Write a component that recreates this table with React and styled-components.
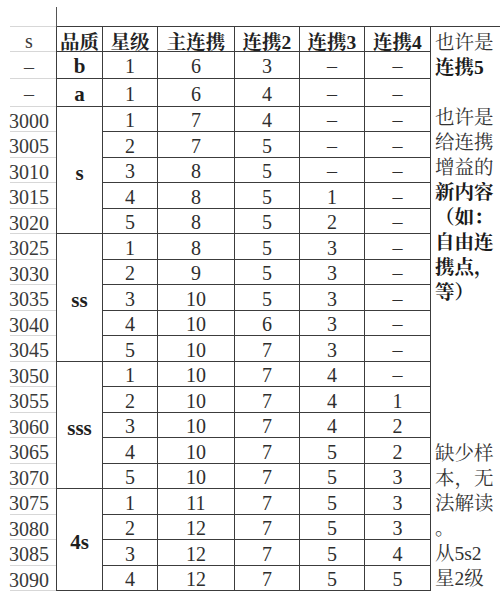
import React from "react";
import styled, { createGlobalStyle } from "styled-components";

const Global = createGlobalStyle`
  html, body { margin: 0; padding: 0; background: #fff; overflow: hidden; }
  body { width: 500px; height: 591px; }
`;

const LINE = "#3c3c3c";
const GRID = "#d7d7d7";
const SERIF = `"Liberation Serif", "Noto Serif CJK SC", "Noto Sans CJK SC", serif`;

const ROWS = [27, 25, 27, 28, 25, 26, 25, 26, 25, 26, 25, 26, 25, 26, 25, 26, 25, 26, 25, 26, 25, 26, 25];

const Sheet = styled.div`
  display: grid;
  grid-template-columns: 57px 46px 55px 77px 65px 65px 66px 69px;
  grid-template-rows: ${ROWS.map((h) => h + "px").join(" ")};
  width: 500px;
  font-family: ${SERIF};
  color: #2e2e2e;
`;

const TopGutter = styled.div`
  box-sizing: border-box;
  background:
    linear-gradient(#555, #555) no-repeat right 0 bottom 0 / 1px 20px,
    linear-gradient(${GRID}, ${GRID}) no-repeat left 10px bottom 0 / calc(100% - 10px) 1px;
`;

const TopBlank = styled.div`
  grid-column: span 7;
  box-sizing: border-box;
  border-bottom: 1px solid ${LINE};
`;

const LabelCell = styled.div`
  box-sizing: border-box;
  display: flex;
  align-items: center;
  justify-content: center;
  padding: 3px 0 0 2px;
  font-size: 20px;
  color: #3a3a3a;
  border-right: 1px solid ${LINE};
  background: linear-gradient(${GRID}, ${GRID}) no-repeat left 10px bottom 0 / calc(100% - 10px) 1px;
`;

const Cell = styled.div`
  box-sizing: border-box;
  display: flex;
  align-items: center;
  justify-content: center;
  padding-top: 3px;
  font-size: 20px;
  border-right: 1px solid ${LINE};
  border-bottom: 1px solid ${LINE};
  white-space: nowrap;
`;

const HeadCell = styled(Cell)`
  font-weight: 700;
  color: #222;
  font-size: 19.5px;
`;

const QualityCell = styled(Cell)`
  grid-row: span ${(p) => p.$span || 1};
  font-weight: 700;
  font-size: 21px;
  color: #1e1e1e;
  padding-top: ${(p) => (p.$span > 1 ? "6px" : "3px")};
`;

const NoteCell = styled.div`
  grid-row: span 22;
  box-sizing: border-box;
  display: flex;
  flex-direction: column;
  padding: 2.5px 0 0 4px;
  font-size: 19.5px;
  color: #2a2a2a;
  overflow: hidden;
`;

const NoteBlock = styled.div`
  display: flex;
  flex-direction: column;
  margin-top: ${(p) => p.$gap || 0}px;
`;

const NoteLine = styled.div`
  height: 25px;
  line-height: 25px;
  white-space: nowrap;
  font-weight: ${(p) => (p.$bold ? 700 : 400)};
  color: ${(p) => (p.$bold ? "#1a1a1a" : "#333")};
`;

const D = "–";

const data = [
  ["–", { q: "b", span: 1 }, "1", "6", "3", D, D],
  ["–", { q: "a", span: 1 }, "1", "6", "4", D, D],
  ["3000", { q: "s", span: 5 }, "1", "7", "4", D, D],
  ["3005", null, "2", "7", "5", D, D],
  ["3010", null, "3", "8", "5", D, D],
  ["3015", null, "4", "8", "5", "1", D],
  ["3020", null, "5", "8", "5", "2", D],
  ["3025", { q: "ss", span: 5 }, "1", "8", "5", "3", D],
  ["3030", null, "2", "9", "5", "3", D],
  ["3035", null, "3", "10", "5", "3", D],
  ["3040", null, "4", "10", "6", "3", D],
  ["3045", null, "5", "10", "7", "3", D],
  ["3050", { q: "sss", span: 5 }, "1", "10", "7", "4", D],
  ["3055", null, "2", "10", "7", "4", "1"],
  ["3060", null, "3", "10", "7", "4", "2"],
  ["3065", null, "4", "10", "7", "5", "2"],
  ["3070", null, "5", "10", "7", "5", "3"],
  ["3075", { q: "4s", span: 5 }, "1", "11", "7", "5", "3"],
  ["3080", null, "2", "12", "7", "5", "3"],
  ["3085", null, "3", "12", "7", "5", "4"],
  ["3090", null, "4", "12", "7", "5", "5"],
];

const headers = ["品质", "星级", "主连携", "连携2", "连携3", "连携4"];

const topNote = [
  ["也许是", false],
  ["连携5", true],
  ["", false],
  ["也许是", false],
  ["给连携", false],
  ["增益的", false],
  ["新内容", true],
  ["（如：", true],
  ["自由连", true],
  ["携点，", true],
  ["等）", true],
];

const bottomNote = ["缺少样", "本，无", "法解读", "。", "从5s2", "星2级"];

export default function App() {
  return (
    <>
      <Global />
      <Sheet>
        <TopGutter />
        <TopBlank />
        <LabelCell>s</LabelCell>
        {headers.map((h) => (
          <HeadCell key={h}>{h}</HeadCell>
        ))}
        <NoteCell>
          <NoteBlock>
            {topNote.map(([t, b], i) => (
              <NoteLine key={i} $bold={b}>
                {t}
              </NoteLine>
            ))}
          </NoteBlock>
          <NoteBlock $gap={136}>
            {bottomNote.map((t, i) => (
              <NoteLine key={i}>{t}</NoteLine>
            ))}
          </NoteBlock>
        </NoteCell>
        {data.map(([label, quality, ...rest], r) => (
          <React.Fragment key={r}>
            <LabelCell>{label}</LabelCell>
            {quality && <QualityCell $span={quality.span}>{quality.q}</QualityCell>}
            {rest.map((v, c) => (
              <Cell key={c}>{v}</Cell>
            ))}
          </React.Fragment>
        ))}
      </Sheet>
    </>
  );
}
